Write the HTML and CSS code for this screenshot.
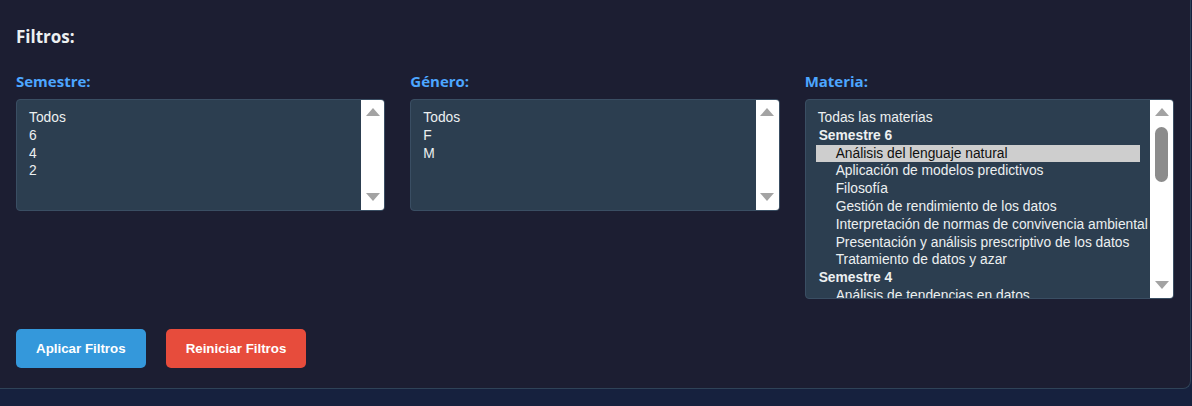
FILE: index.html
```html
<!DOCTYPE html>
<html lang="es">
<head>
<meta charset="utf-8">
<title>Filtros</title>
<link rel="stylesheet" href="styles.css">
</head>
<body>
<div class="panel">
  <h3 class="title">Filtros:</h3>
  <div class="filters">
    <div class="filter-group">
      <label class="filter-label">Semestre:</label>
      <div class="listbox" role="listbox">
        <div class="options">
          <div class="opt">Todos</div>
          <div class="opt">6</div>
          <div class="opt">4</div>
          <div class="opt">2</div>
        </div>
        <div class="scrollbar">
          <span class="arrow up"></span>
          <span class="arrow down"></span>
        </div>
      </div>
    </div>
    <div class="filter-group">
      <label class="filter-label">Género:</label>
      <div class="listbox" role="listbox">
        <div class="options">
          <div class="opt">Todos</div>
          <div class="opt">F</div>
          <div class="opt">M</div>
        </div>
        <div class="scrollbar">
          <span class="arrow up"></span>
          <span class="arrow down"></span>
        </div>
      </div>
    </div>
    <div class="filter-group">
      <label class="filter-label">Materia:</label>
      <div class="listbox listbox-tall" role="listbox">
        <div class="options">
          <div class="opt">Todas las materias</div>
          <div class="group-label">Semestre 6</div>
          <div class="opt indent selected">Análisis del lenguaje natural</div>
          <div class="opt indent">Aplicación de modelos predictivos</div>
          <div class="opt indent">Filosofía</div>
          <div class="opt indent">Gestión de rendimiento de los datos</div>
          <div class="opt indent">Interpretación de normas de convivencia ambiental</div>
          <div class="opt indent">Presentación y análisis prescriptivo de los datos</div>
          <div class="opt indent">Tratamiento de datos y azar</div>
          <div class="group-label">Semestre 4</div>
          <div class="opt indent">Análisis de tendencias en datos</div>
        </div>
        <div class="scrollbar">
          <span class="arrow up"></span>
          <span class="thumb"></span>
          <span class="arrow down"></span>
        </div>
      </div>
    </div>
  </div>
  <div class="actions">
    <button class="btn btn-apply">Aplicar Filtros</button>
    <button class="btn btn-reset">Reiniciar Filtros</button>
  </div>
</div>
</body>
</html>
```
FILE: styles.css
```css
html, body {
  margin: 0;
  padding: 0;
  background: #16213e;
}

.panel {
  width: 1158px;
  padding: 26px 16px 20px;
  background: #1c1e32;
  border-right: 1px solid #2f4358;
  border-bottom: 1px solid #2f4358;
  border-bottom-right-radius: 8px;
}

.title {
  margin: 0 0 24px;
  font-family: "Open Sans", "Lato", sans-serif;
  font-weight: 700;
  font-size: 17px;
  line-height: 22px;
  color: #ecf0f1;
}

.filters {
  display: grid;
  grid-template-columns: repeat(3, minmax(0, 1fr));
  column-gap: 25px;
  align-items: start;
}

.filter-group {
  display: flex;
  flex-direction: column;
  min-width: 0;
}

.filter-label {
  margin-bottom: 9px;
  font-family: "Open Sans", "Lato", sans-serif;
  font-weight: 700;
  font-size: 15px;
  line-height: 18px;
  color: #4da6ff;
}

.listbox {
  display: flex;
  height: 112px;
  box-sizing: border-box;
  border: 1px solid #3a4e63;
  border-radius: 4px;
  background: #2c3e50;
  overflow: hidden;
}

.listbox-tall {
  height: 200px;
}

.options {
  flex: 1;
  min-width: 0;
  padding: 9px 10px 10px;
  overflow: hidden;
  font-family: "Liberation Sans", Arial, sans-serif;
  font-size: 13.8px;
  color: #ecf0f1;
}

.opt,
.group-label {
  height: 17.8px;
  line-height: 17.8px;
  padding: 0 2px;
  white-space: nowrap;
}

.group-label {
  font-weight: 700;
  padding-left: 3px;
}

.opt.indent {
  padding-left: 20px;
}

.opt.selected {
  background: #cecece;
  color: #101010;
}

.scrollbar {
  width: 23px;
  flex: none;
  display: flex;
  flex-direction: column;
  align-items: center;
  padding: 8px 0 9px;
  box-sizing: border-box;
  background: #ffffff;
}

.arrow {
  width: 0;
  height: 0;
  border-left: 7.5px solid transparent;
  border-right: 7.5px solid transparent;
}

.arrow.up {
  border-bottom: 8px solid #a3a3a3;
}

.arrow.down {
  margin-top: auto;
  border-top: 8px solid #a3a3a3;
}

.thumb {
  width: 13px;
  height: 55px;
  margin-top: 11px;
  border-radius: 7px;
  background: #8c8c8c;
}

.actions {
  display: flex;
  gap: 20px;
  margin-top: 30px;
}

.btn {
  padding: 12px 20px;
  border: none;
  border-radius: 5px;
  font-family: "Liberation Sans", Arial, sans-serif;
  font-weight: 700;
  font-size: 13.33px;
  line-height: 15px;
  color: #ffffff;
  cursor: pointer;
}

.btn-apply {
  background: #3498db;
}

.btn-reset {
  background: #e74c3c;
}
```
